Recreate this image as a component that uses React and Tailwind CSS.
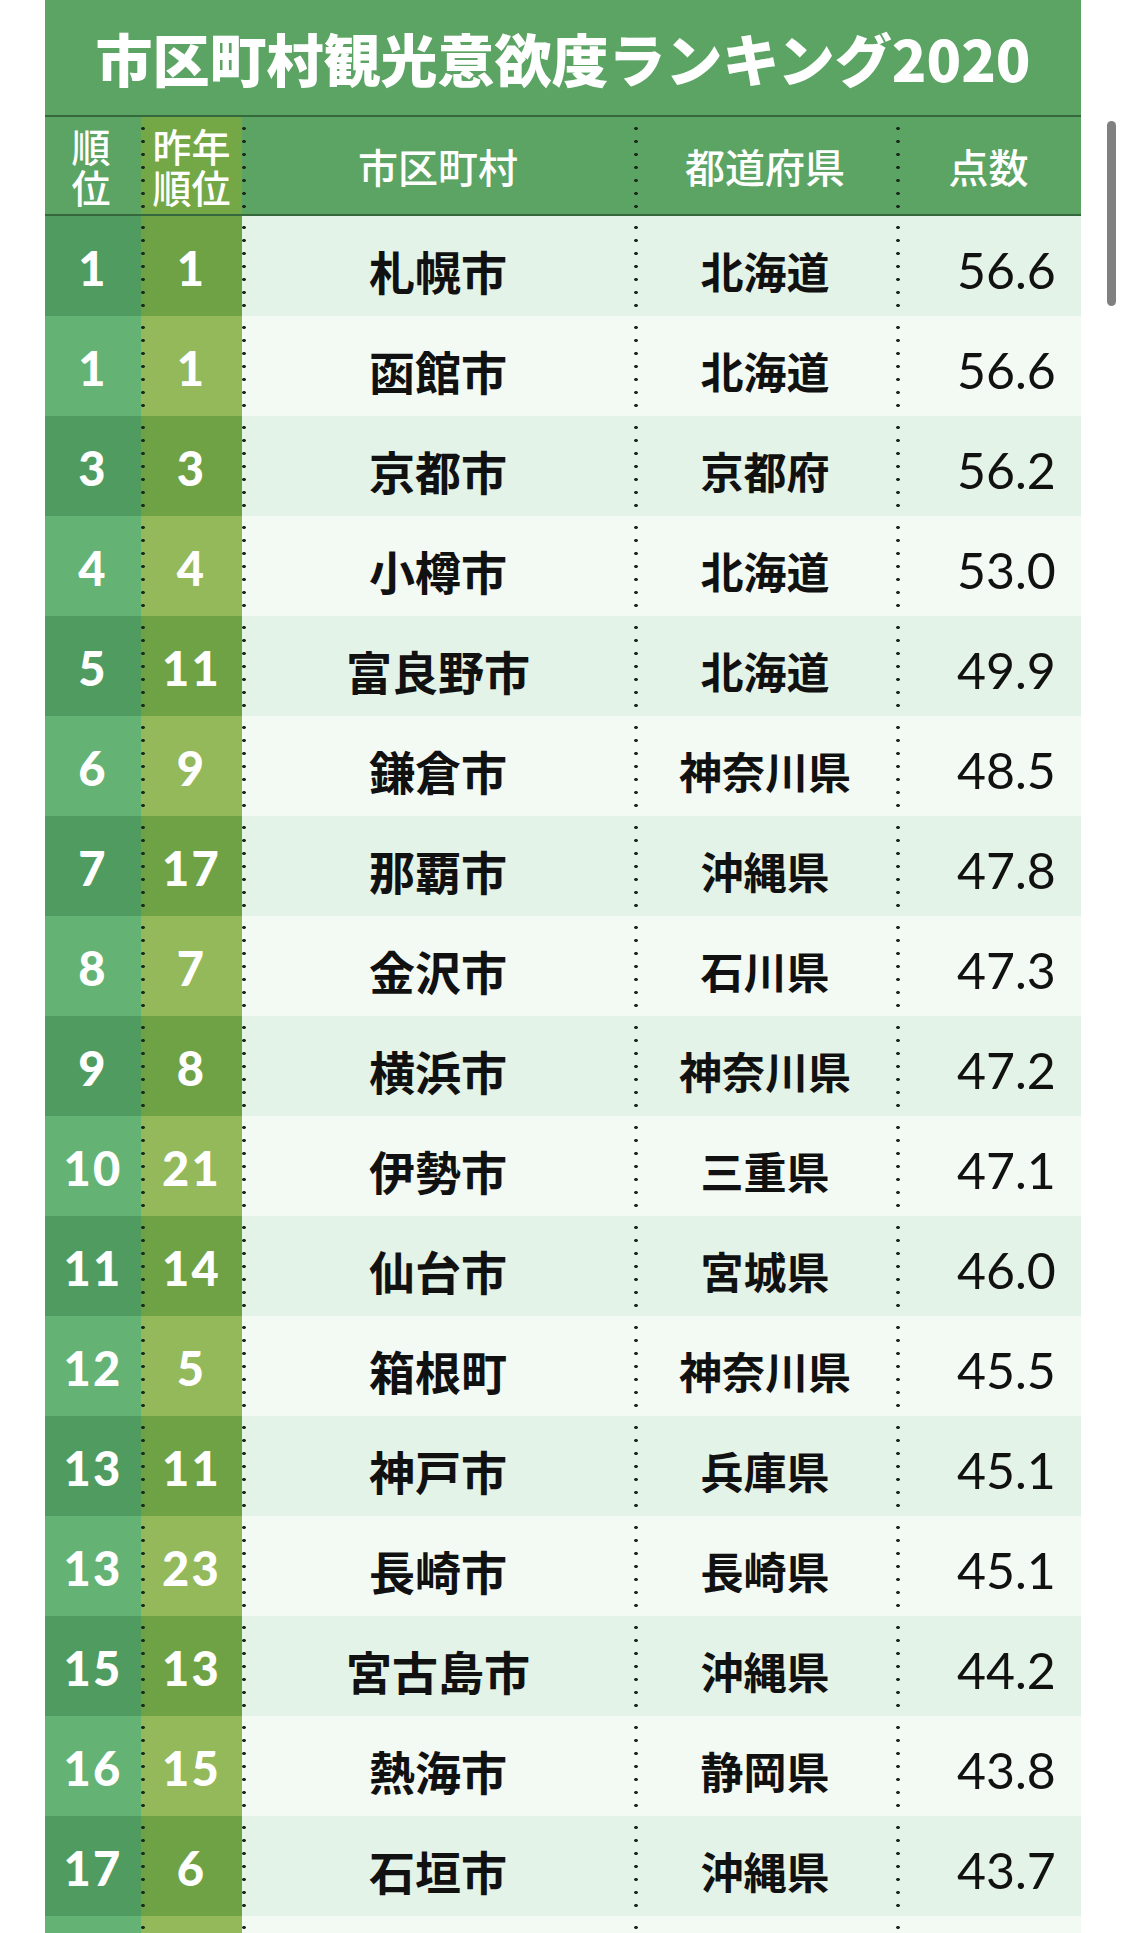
const ROWS = [
  ["1", "1", "札幌市", "北海道", "56.6"],
  ["1", "1", "函館市", "北海道", "56.6"],
  ["3", "3", "京都市", "京都府", "56.2"],
  ["4", "4", "小樽市", "北海道", "53.0"],
  ["5", "11", "富良野市", "北海道", "49.9"],
  ["6", "9", "鎌倉市", "神奈川県", "48.5"],
  ["7", "17", "那覇市", "沖縄県", "47.8"],
  ["8", "7", "金沢市", "石川県", "47.3"],
  ["9", "8", "横浜市", "神奈川県", "47.2"],
  ["10", "21", "伊勢市", "三重県", "47.1"],
  ["11", "14", "仙台市", "宮城県", "46.0"],
  ["12", "5", "箱根町", "神奈川県", "45.5"],
  ["13", "11", "神戸市", "兵庫県", "45.1"],
  ["13", "23", "長崎市", "長崎県", "45.1"],
  ["15", "13", "宮古島市", "沖縄県", "44.2"],
  ["16", "15", "熱海市", "静岡県", "43.8"],
  ["17", "6", "石垣市", "沖縄県", "43.7"],
  ["", "", "", "", ""],
];

// dotted separator on the left edge of a cell
const DOTS =
  "bg-[image:radial-gradient(circle,#1d2b1f_1.5px,transparent_2px)] bg-[length:4px_13px] bg-repeat-y bg-[position:0_5px]";

const JP = "font-['Noto_Sans_CJK_JP',sans-serif]";
const NUM = "font-['Lato','Noto_Sans_CJK_JP',sans-serif]";

function Row({ r, i }) {
  const dark = i % 2 === 0;
  const c1 = dark ? "bg-[#4f9b60]" : "bg-[#64b374]";
  const c2 = dark ? "bg-[#6fa244]" : "bg-[#94b95b]";
  const cd = dark ? "bg-[#e4f3e7]" : "bg-[#f3faf4]";
  return (
    <div className="grid h-[100px] grid-cols-[96px_101px_392px_262px_185px]">
      <div className={`${c1} ${NUM} flex items-center justify-center pt-1 text-[47px] font-black tracking-[0.05em] text-white`}>
        {r[0]}
      </div>
      <div className={`${c2} ${DOTS} ${NUM} flex items-center justify-center pt-1 text-[47px] font-black tracking-[0.05em] text-white`}>
        {r[1]}
      </div>
      <div className={`${cd} ${DOTS} ${JP} flex items-center justify-center pt-2 text-[46px] font-bold text-[#111]`}>
        {r[2]}
      </div>
      <div className={`${cd} ${DOTS} ${JP} flex items-center justify-center pt-2 text-[43px] font-bold text-[#111]`}>
        {r[3]}
      </div>
      <div className={`${cd} ${DOTS} ${NUM} flex items-center pl-[61px] pt-2 text-[50px] text-[#111]`}>
        {r[4]}
      </div>
    </div>
  );
}

export default function App() {
  return (
    <div className="flex h-[1933px] overflow-hidden bg-white pl-[45px]">
      <div className="w-[1036px] shrink-0">
        <div className={`${JP} flex h-[115px] items-center justify-center bg-[#5ba463] text-[57px] font-black text-white`}>
          市区町村観光意欲度ランキング2020
        </div>
        <div className={`${JP} grid h-[101px] grid-cols-[96px_101px_392px_262px_185px] border-y-2 border-[#36683e] bg-[#5ba463] font-medium text-white`}>
          <div className="flex flex-col items-center justify-center pr-1 text-[39px] leading-[41px]">
            <span>順</span>
            <span>位</span>
          </div>
          <div className={`${DOTS} flex flex-col items-center justify-center bg-[#74a846] text-[39px] leading-[41px]`}>
            <span>昨年</span>
            <span>順位</span>
          </div>
          <div className={`${DOTS} flex items-center justify-center text-[40px]`}>市区町村</div>
          <div className={`${DOTS} flex items-center justify-center text-[40px]`}>都道府県</div>
          <div className={`${DOTS} flex items-center justify-center text-[40px]`}>点数</div>
        </div>
        {ROWS.map((r, i) => (
          <Row key={i} r={r} i={i} />
        ))}
      </div>
      <div className="ml-[26px] mt-[121px] h-[185px] w-[9px] shrink-0 rounded-full bg-[#808080]" />
    </div>
  );
}
